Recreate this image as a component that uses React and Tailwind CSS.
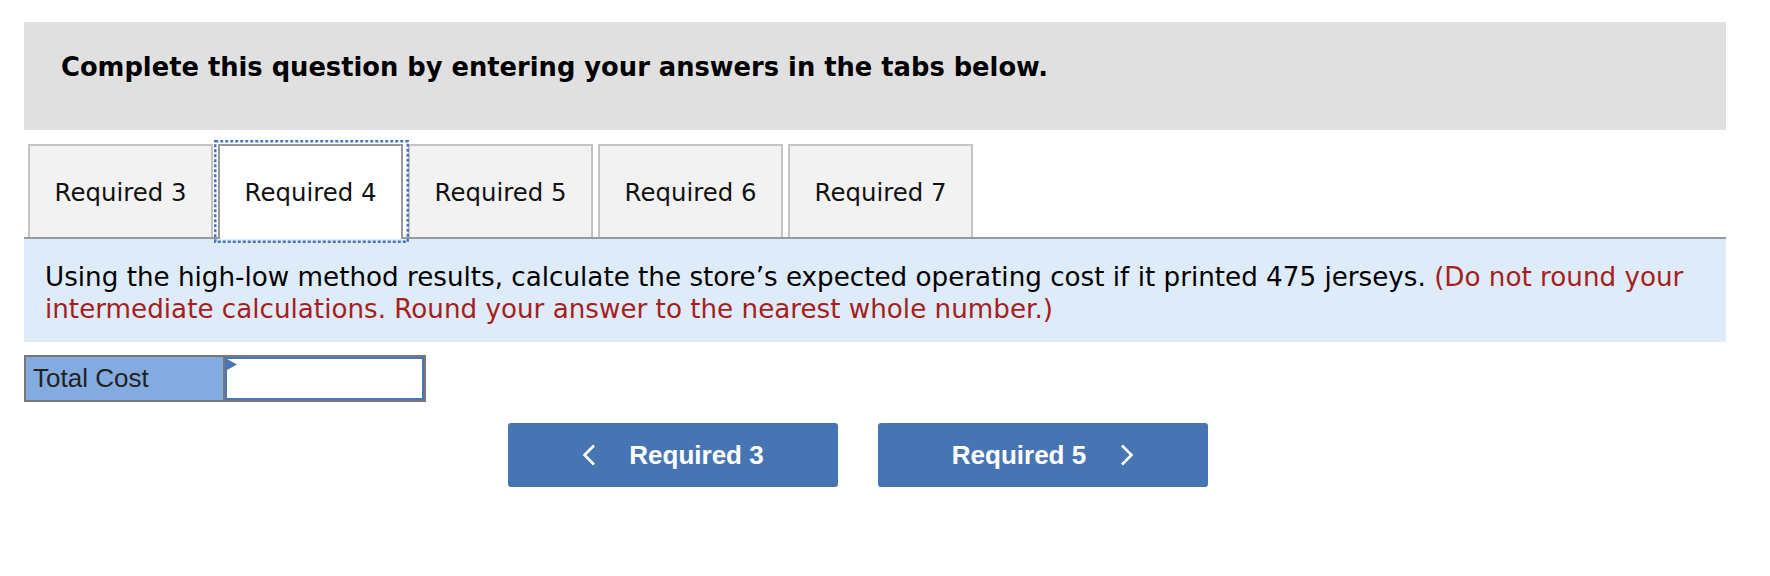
export default function App() {
  const tabs = ["Required 3", "Required 4", "Required 5", "Required 6", "Required 7"];
  return (
    <div className="min-h-[576px] bg-white pt-[22px] pl-[24px]">
      <div className="w-[1702px]">
        <div className="h-[108px] bg-[#e0e0e0] pt-[30px] pl-[37px] font-['DejaVu_Sans',sans-serif] text-[25.75px] font-bold leading-[31px] text-black">
          Complete this question by entering your answers in the tabs below.
        </div>

        <div className="mt-[14px] flex items-end gap-[5px] border-b-2 border-[#999999] pl-[4px]">
          {tabs.map((t, i) =>
            i === 1 ? (
              <div
                key={t}
                className="relative z-10 -mb-[2px] h-[95px] w-[185px] border-2 border-b-0 border-[#999999] bg-white pt-[33px] text-center font-['DejaVu_Sans',sans-serif] text-[24.4px] leading-[28px] text-[#111]"
              >
                <svg className="pointer-events-none absolute -left-[6px] -top-[6px]" width="195" height="103" viewBox="0 0 195 103">
                  <rect x="1.25" y="1.25" width="192.5" height="100.5" fill="none" stroke="#4a76b5" strokeWidth="2.5" strokeDasharray="3 2" />
                </svg>
                {t}
              </div>
            ) : (
              <div
                key={t}
                className="h-[93px] w-[185px] border-2 border-b-0 border-[#c4c4c4] bg-[#f2f2f2] pt-[33px] text-center font-['DejaVu_Sans',sans-serif] text-[24.4px] leading-[28px] text-[#111]"
              >
                {t}
              </div>
            )
          )}
        </div>

        <div className="bg-[#deebf8] pt-[22px] pb-[17px] pl-[21px] font-['DejaVu_Sans',sans-serif] text-[26.2px] leading-[32px] text-black">
          <div className="whitespace-nowrap">
            Using the high-low method results, calculate the store’s expected operating cost if it printed 475 jerseys.{" "}
            <span className="text-[#a61e1e]">(Do not round your</span>
          </div>
          <div className="whitespace-nowrap text-[#a61e1e]">
            intermediate calculations. Round your answer to the nearest whole number.)
          </div>
        </div>

        <div className="mt-[13px] flex h-[47px] w-[402px] border-2 border-[#777777]">
          <div className="flex w-[199px] items-center border-r-2 border-[#777777] bg-[#84abdf] pl-[7px] font-['Liberation_Sans',Arial,sans-serif] text-[26px] text-[#222]">
            Total Cost
          </div>
          <div className="relative flex-1 border-2 border-[#4a76b5] bg-white">
            <svg className="absolute left-0 top-0" width="10" height="11" viewBox="0 0 10 11">
              <polygon points="0,0 10,5.5 0,11" fill="#4a76b5" />
            </svg>
            <input className="h-full w-full bg-transparent outline-none" aria-label="Total Cost" />
          </div>
        </div>

        <div className="mt-[21px] flex gap-[40px] pl-[484px]">
          <button className="flex h-[64px] w-[330px] items-center justify-center gap-[33px] rounded-[3px] bg-[#4775b3] font-['Liberation_Sans',Arial,sans-serif] text-[26px] font-bold text-white">
            <svg width="14" height="22" viewBox="0 0 14 22">
              <polyline points="12,1.5 2.5,11 12,20.5" fill="none" stroke="white" strokeWidth="2.6" />
            </svg>
            <span>Required 3</span>
          </button>
          <button className="flex h-[64px] w-[330px] items-center justify-center gap-[34px] rounded-[3px] bg-[#4775b3] font-['Liberation_Sans',Arial,sans-serif] text-[26px] font-bold text-white">
            <span>Required 5</span>
            <svg width="14" height="22" viewBox="0 0 14 22">
              <polyline points="2,1.5 11.5,11 2,20.5" fill="none" stroke="white" strokeWidth="2.6" />
            </svg>
          </button>
        </div>
      </div>
    </div>
  );
}
